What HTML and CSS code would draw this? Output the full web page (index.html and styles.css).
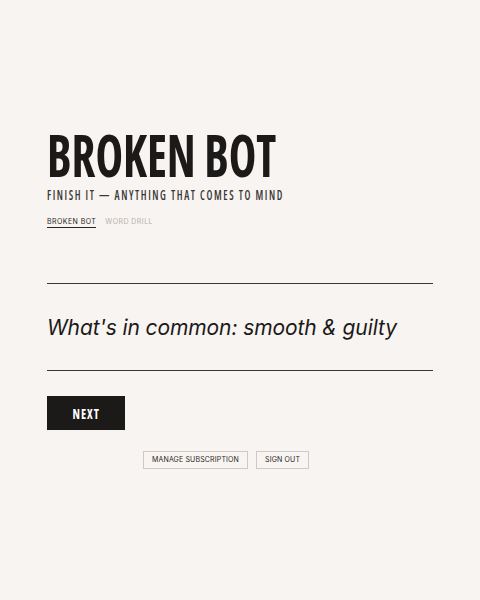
FILE: index.html
```html
<!DOCTYPE html>
<html lang="en">
<head>
<meta charset="utf-8">
<title>Broken Bot</title>
<link rel="stylesheet" href="styles.css">
</head>
<body>
<main class="page">
  <header class="head">
    <h1 class="title"><span class="squeeze">BROKEN BOT</span></h1>
    <p class="subtitle"><span class="squeeze">FINISH IT — ANYTHING THAT COMES TO MIND</span></p>
    <nav class="tabs">
      <a class="tab active">BROKEN BOT</a>
      <a class="tab">WORD DRILL</a>
    </nav>
  </header>
  <section class="prompt">
    <p class="question">What's in common: smooth &amp; guilty</p>
  </section>
  <button class="next"><span class="squeeze">NEXT</span></button>
  <footer class="account">
    <button class="ghost">MANAGE SUBSCRIPTION</button>
    <button class="ghost">SIGN OUT</button>
  </footer>
</main>
</body>
</html>
```
FILE: styles.css
```css
html,body{margin:0;padding:0}
body{background:#f8f4f1;color:#1c1a19;font-family:"Inter","DejaVu Sans",sans-serif}
.page{padding:125px 47px 0;display:flex;flex-direction:column;align-items:flex-start}
.head{display:flex;flex-direction:column;align-items:flex-start}
.squeeze{display:inline-block;transform-origin:left center}
.title{margin:0;font-family:"Open Sans",sans-serif;font-stretch:75%;font-weight:700;font-size:59px;line-height:59px;letter-spacing:0;color:#1c1a19}
.title .squeeze{transform:scaleX(0.79)}
.subtitle{margin:3px 0 0;font-family:"Open Sans",sans-serif;font-stretch:75%;font-weight:600;font-size:14.5px;line-height:16px;letter-spacing:2.2px;color:#3a3735}
.subtitle .squeeze{transform:scaleX(0.72)}
.tabs{display:flex;gap:9px;margin-top:14px}
.tab{font-size:7px;letter-spacing:0.45px;line-height:9px;padding-bottom:1px;color:#b5b0ac;border-bottom:1px solid transparent}
.tab.active{color:#2a2725;border-bottom-color:#2a2725}
.prompt{align-self:stretch;margin-top:55px;border-top:1px solid #3a3735;border-bottom:1px solid #3a3735;height:86px;display:flex;align-items:center}
.question{margin:0;font-family:"Inter",sans-serif;font-style:italic;font-weight:400;font-size:21px;color:#1c1a19;letter-spacing:-0.1px}
.next{margin-top:25px;width:78px;height:34px;background:#1c1a19;border:none;color:#fff;font-family:"Open Sans",sans-serif;font-stretch:75%;font-weight:700;font-size:15px;letter-spacing:1.3px;padding:0;display:flex;align-items:center;justify-content:center}
.next .squeeze{transform:scaleX(0.8);transform-origin:center}
.account{display:flex;gap:8px;margin:21px 0 0 96px}
.ghost{background:transparent;border:1px solid #cfc9c5;color:#2a2725;font-family:"Inter",sans-serif;font-size:7px;letter-spacing:0.15px;height:18px;padding:0 8px;line-height:16px}
```
